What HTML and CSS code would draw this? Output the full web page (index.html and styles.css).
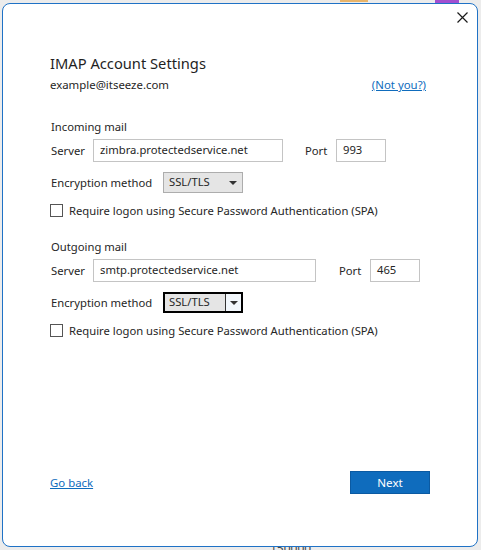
FILE: index.html
```html
<!DOCTYPE html>
<html lang="en">
<head>
<meta charset="utf-8">
<title>IMAP Account Settings</title>
<link rel="stylesheet" href="styles.css">
</head>
<body>
<div class="desk">
  <span class="deco deco-orange"></span>
  <span class="deco deco-purple"></span>
  <span class="deco deco-num">150000</span>
</div>
<main class="dialog">
  <button class="close" aria-label="Close">
    <svg width="11" height="11" viewBox="0 0 11 11"><path d="M0.5 0.5 L10.5 10.5 M10.5 0.5 L0.5 10.5" stroke="#1a1a1a" stroke-width="1.2" fill="none"/></svg>
  </button>
  <h1 class="title">IMAP Account Settings</h1>
  <div class="account">
    <span>example@itseeze.com</span>
    <a class="link notyou" href="#">(Not you?)</a>
  </div>

  <section class="group group-in">
    <div class="group-label">Incoming mail</div>
    <div class="row server-row">
      <span class="lbl">Server</span>
      <span class="field field-server-in">zimbra.protectedservice.net</span>
      <span class="lbl port-lbl port-in">Port</span>
      <span class="field field-port">993</span>
    </div>
    <div class="row enc-row">
      <span class="lbl">Encryption method</span>
      <span class="select">
        <span class="select-val">SSL/TLS</span>
        <span class="select-arrow"><svg width="8" height="4" viewBox="0 0 8 4"><path d="M0 0 H8 L4 4 Z" fill="#333"/></svg></span>
      </span>
    </div>
    <label class="row check-row">
      <span class="box"></span>
      <span>Require logon using Secure Password Authentication (SPA)</span>
    </label>
  </section>

  <section class="group group-out">
    <div class="group-label">Outgoing mail</div>
    <div class="row server-row">
      <span class="lbl">Server</span>
      <span class="field field-server-out">smtp.protectedservice.net</span>
      <span class="lbl port-lbl port-out">Port</span>
      <span class="field field-port">465</span>
    </div>
    <div class="row enc-row">
      <span class="lbl">Encryption method</span>
      <span class="select select-focus">
        <span class="select-val">SSL/TLS</span>
        <span class="select-arrow"><svg width="8" height="4" viewBox="0 0 8 4"><path d="M0 0 H8 L4 4 Z" fill="#333"/></svg></span>
      </span>
    </div>
    <label class="row check-row">
      <span class="box"></span>
      <span>Require logon using Secure Password Authentication (SPA)</span>
    </label>
  </section>

  <footer class="footer">
    <a class="link back" href="#">Go back</a>
    <button class="next">Next</button>
  </footer>
</main>
</body>
</html>
```

FILE: styles.css
```css
* { box-sizing: border-box; }
html, body { margin: 0; padding: 0; }
body {
  width: 481px;
  height: 550px;
  overflow: hidden;
  background: #ececec;
  font-family: "Noto Sans", "Open Sans", sans-serif;
  color: #262626;
  position: relative;
}
.desk { position: absolute; inset: 0; }
.deco { position: absolute; display: block; }
.deco-orange { left: 340px; top: 0; width: 28px; height: 2px; background: #e8b46a; }
.deco-purple { left: 435px; top: 0; width: 24px; height: 3px; background: #a24fd0; }
.deco-num { left: 270px; top: 542px; font-size: 12px; line-height: 14px; color: #444; }

.dialog {
  position: relative;
  margin: 3px 0 0 2px;
  width: 476px;
  height: 544px;
  background: #fff;
  border: 1px solid #1f72c6;
  border-radius: 8px;
  padding: 48px 47px 52px 47px;
  display: flex;
  flex-direction: column;
  font-size: 11.25px;
}
.close {
  position: absolute;
  top: 2px;
  right: 4px;
  width: 22px;
  height: 22px;
  border: 0;
  background: transparent;
  padding: 0;
  display: flex;
  align-items: center;
  justify-content: center;
}
.title {
  margin: 0;
  font-size: 14.7px;
  font-weight: 400;
  line-height: 22px;
  color: #1f1f1f;
}
.account {
  display: flex;
  justify-content: space-between;
  font-size: 11.4px;
  line-height: 18px;
  margin-top: 2px;
}
.notyou { margin-right: 4px; }
.link { color: #0f6cbd; text-decoration: underline; }

.group { display: flex; flex-direction: column; }
.group-in { margin-top: 25px; }
.group-out { margin-top: 22px; }
.group-label { line-height: 16px; padding-left: 1px; }
.row { display: flex; align-items: center; }
.lbl { padding-left: 1px; }
.server-row { margin-top: 4px; height: 23px; }
.server-row .lbl:first-child { width: 43px; }
.field {
  height: 23px;
  border: 1px solid #c4c4c4;
  padding: 0 6px;
  line-height: 20px;
  font-size: 11.25px;
  background: #fff;
}
.field-server-in { width: 190px; }
.field-server-out { width: 223px; }
.port-in { margin-left: 21px; width: 32px; }
.port-out { margin-left: 22px; width: 32px; }
.field-port { width: 50px; }

.enc-row { margin-top: 10px; height: 21px; }
.enc-row .lbl { width: 113px; }
.select {
  display: flex;
  width: 80px;
  height: 21px;
  border: 1px solid #adadad;
  background: #e5e5e5;
}
.select-val { flex: 1; padding-left: 5px; line-height: 18px; }
.select-arrow { width: 16px; display: flex; align-items: center; justify-content: center; padding-right: 2px; }
.select-focus { border: 2px solid #000; }
.select-focus .select-val { padding-left: 4px; line-height: 16px; }
.select-focus .select-arrow { background: #f2f7fc; border-left: 1px solid #333; padding-right: 0; }

.check-row { margin-top: 10px; height: 14px; gap: 6px; }
.box { width: 13px; height: 13px; border: 1px solid #555; background: #fff; }

.footer {
  margin-top: auto;
  display: flex;
  justify-content: space-between;
  align-items: center;
  height: 23px;
}
.back { font-size: 11.4px; }
.next {
  width: 80px;
  height: 23px;
  background: #0f6cbd;
  border: 1px solid #0b5aa2;
  color: #fff;
  font-family: inherit;
  font-size: 11.6px;
  padding: 0;
}
```
